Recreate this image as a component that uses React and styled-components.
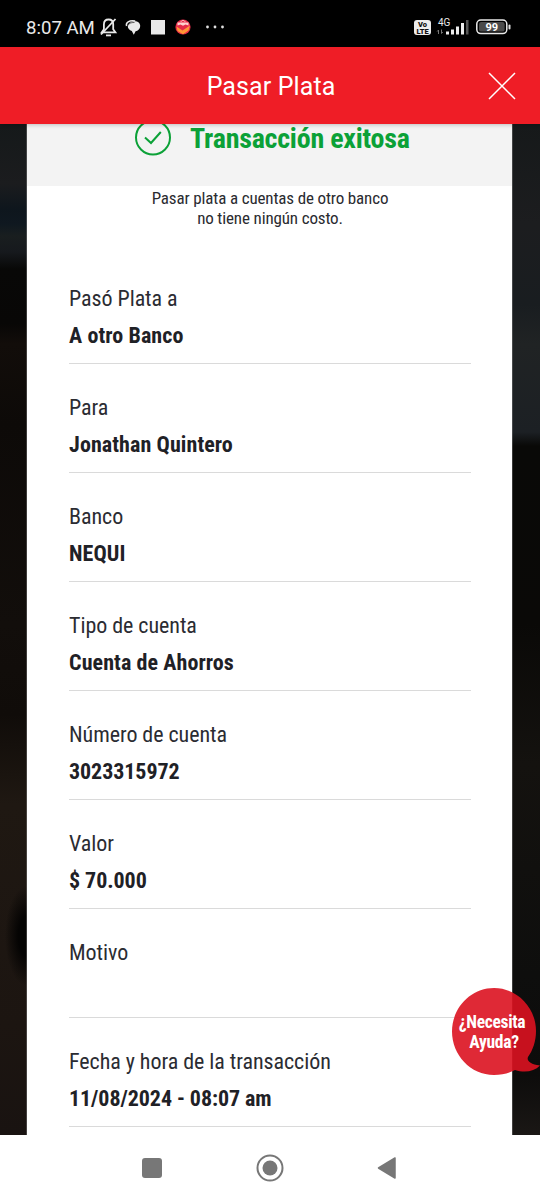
import React from "react";
import styled, { createGlobalStyle } from "styled-components";

const GlobalStyle = createGlobalStyle`
  * { box-sizing: border-box; }
  body { margin: 0; background: #000; }
`;

const condensed = `
  font-family: "Roboto Condensed", Roboto, "Liberation Sans", sans-serif;
  font-stretch: 75%;
`;

const Screen = styled.div`
  position: relative;
  display: flex;
  flex-direction: column;
  width: 540px;
  height: 1200px;
  overflow: hidden;
  background: #000;
  font-family: Roboto, "Liberation Sans", sans-serif;
`;

const StatusBar = styled.div`
  flex: none;
  display: flex;
  align-items: center;
  height: 47px;
  padding: 7px 28px 0 26px;
  color: #e9e9e9;
`;

const Clock = styled.span`
  width: 72px;
  padding-top: 1px;
  font-size: 18.6px;
  line-height: 24px;
  white-space: nowrap;
`;

const StatusIcons = styled.svg`
  display: block;
  flex: none;
`;

const Spacer = styled.div`
  flex: 1;
`;

const Header = styled.header`
  flex: none;
  z-index: 1;
  display: grid;
  grid-template-columns: 1fr auto 1fr;
  align-items: center;
  height: 77px;
  padding: 0 24px 0 26px;
  background: #ef1d26;
  box-shadow: 0 1px 4px rgba(0, 0, 0, 0.22);
`;

const HeaderTitle = styled.h1`
  grid-column: 2;
  margin: 2px 0 0;
  font-size: 25px;
  font-weight: 400;
  line-height: 32px;
  letter-spacing: 0.1px;
  color: #fff;
`;

const CloseButton = styled.button`
  justify-self: end;
  display: flex;
  padding: 0;
  border: 0;
  background: none;
`;

const Backdrop = styled.main`
  flex: none;
  display: flex;
  height: 1011px;
  padding: 0 28px 0 27px;
  background:
    radial-gradient(ellipse 22px 50px at 27px 812px, #050403 40%, transparent 100%) no-repeat,
    linear-gradient(180deg, #15191a 0, #1b1c1e 60px, #0e161d 85px, #0f1820 100px, #191e1f 112px, #16191d 128px, #080807 145px, #080706 200px, #120d0a 220px, #0d0a08 300px, #120e0b 500px, #100c09 590px, #1f1812 680px, #1c1511 900px, #191311 1011px) left / 27px 100% no-repeat,
    linear-gradient(180deg, #16191a 0, #1c1d1f 100px, #191d20 180px, #202324 220px, #1c2024 308px, #090907 322px, #0a0907 500px, #14120f 640px, #0e0e0d 850px, #0d0c0b 950px, #1a1715 1011px) right / 28px 100% no-repeat,
    #000;
`;

const Sheet = styled.section`
  flex: 1;
  background: #fff;
  box-shadow: 0 0 0 1px rgba(150, 150, 150, 0.35);
`;

const ResultBanner = styled.div`
  display: flex;
  align-items: flex-start;
  height: 62px;
  padding: 0 0 0 107px;
  background: #f3f3f3;
`;

const CheckIcon = styled.svg`
  display: block;
  flex: none;
  margin: -6px 18px 0 0;
`;

const ResultTitle = styled.h2`
  ${condensed}
  margin: 0;
  font-size: 28px;
  font-weight: 700;
  line-height: 30px;
  letter-spacing: -0.24px;
  color: #0ba137;
  white-space: nowrap;
`;

const CostNote = styled.p`
  ${condensed}
  height: 69px;
  margin: 0;
  padding: 3px 0 0 1px;
  font-size: 17px;
  line-height: 19.5px;
  letter-spacing: -0.14px;
  text-align: center;
  color: #2a2b30;
`;

const DetailList = styled.dl`
  margin: 0 41px 0 42px;
`;

const DetailRow = styled.div`
  height: 109px;
  padding-top: 25px;
  border-bottom: 1px solid #dadada;
`;

const DetailLabel = styled.dt`
  ${condensed}
  font-size: 22px;
  line-height: 37px;
  letter-spacing: -0.05px;
  color: #2b2c32;
`;

const DetailValue = styled.dd`
  ${condensed}
  margin: 0;
  font-size: 22px;
  font-weight: 700;
  line-height: 37px;
  letter-spacing: ${({ $numeric }) => ($numeric ? "-0.06px" : "0.09px")};
  color: #1f2126;
`;

const HelpBubble = styled.button`
  position: absolute;
  top: 988px;
  right: 0;
  width: 88px;
  height: 88px;
  padding: 0;
  border: 0;
  background: none;
`;

const BubbleShape = styled.svg`
  position: absolute;
  inset: 0;
`;

const BubbleText = styled.span`
  ${condensed}
  position: relative;
  display: block;
  width: ${({ $width }) => $width}px;
  font-size: 17.5px;
  font-weight: 700;
  line-height: 20.5px;
  letter-spacing: -0.3px;
  text-align: center;
  color: #fff;
`;

const NavBar = styled.nav`
  flex: none;
  display: flex;
  align-items: center;
  justify-content: space-between;
  height: 65px;
  padding: 0 143px 0 142px;
  background: #fff;
`;

const details = [
  ["Pasó Plata a", "A otro Banco"],
  ["Para", "Jonathan Quintero"],
  ["Banco", "NEQUI"],
  ["Tipo de cuenta", "Cuenta de Ahorros"],
  ["Número de cuenta", "3023315972"],
  ["Valor", "$ 70.000"],
  ["Motivo", ""],
  ["Fecha y hora de la transacción", "11/08/2024 - 08:07 am"],
];

function LeftStatusIcons() {
  return (
    <StatusIcons width="130" height="20" viewBox="98 17 130 20" fill="none">
      <g stroke="#e9e9e9" strokeWidth="1.8">
        <path d="M101.8 32.3h13.6l-2.200-3v-4.800c0-3-1.800-5-4.600-5s-4.700 2-4.700 5v4.800z" />
        <path d="M101 34.500L115.500 19" />
        <path d="M106 35.400h5" />
      </g>
      <path d="M134 21.200c3.800-.3 6.200 1.800 6.200 4.800 0 3-2.200 4.900-4.600 5.300l-1.800 3.400-2-3.800c-2.400-.7-4.100-2.600-4-4.900.6-2.800 2.800-4.700 6.200-4.800z" fill="#e9e9e9" />
      <path d="M126.600 26c-1.200-3.500 2.500-6 8.600-5" stroke="#e9e9e9" strokeWidth="1.500" />
      <path d="M128 25.500c.6-2 3-3.200 6.500-3" stroke="#222" strokeWidth=".7" />
      <rect x="151" y="20" width="14" height="14.500" fill="#e9e9e9" />
      <circle cx="183" cy="27" r="7.600" fill="#e62a48" />
      <path d="M176.500 26.500l6 4 7.500-5-1.500 5-5.500 3.800-5.500-3.300z" fill="#ff9635" />
      <path d="M177.500 25.500v-3h11v3l-3-1-2.500 1.300-2.500-1.300z" fill="#ffd0cd" />
      <path d="M181 22c0-2 4-2 4 0" stroke="#ffd0cd" />
      <g fill="#e0e0e0">
        <circle cx="207.500" cy="27" r="1.400" />
        <circle cx="215" cy="27" r="1.400" />
        <circle cx="222.500" cy="27" r="1.400" />
      </g>
    </StatusIcons>
  );
}

function RightStatusIcons() {
  return (
    <StatusIcons width="98" height="22" viewBox="414 16 98 22" fontFamily="Roboto, sans-serif">
      <rect x="414" y="20" width="17" height="15" rx="3" fill="#ededed" />
      <text x="422.500" y="26.800" fontSize="7.500" fontWeight="900" textAnchor="middle" fill="#111">Vo</text>
      <text x="422.500" y="33.600" fontSize="7.500" fontWeight="900" textAnchor="middle" fill="#111">LTE</text>
      <text x="438" y="26" fontSize="10" fill="#e9e9e9">4G</text>
      <path d="M438.500 34v-4l-1.300 1.500M441.500 29.500v4l1.300-1.500" stroke="#777" fill="none" />
      <g fill="#ededed">
        <rect x="446" y="31.500" width="3" height="3" />
        <rect x="451" y="29.500" width="3" height="5" />
        <rect x="456" y="26.500" width="3" height="8" />
        <rect x="461" y="23" width="3" height="11.500" />
      </g>
      <rect x="466" y="20" width="2.500" height="14.500" fill="#555" />
      <rect x="476.800" y="20" width="30" height="13.600" rx="4" fill="#000" stroke="#e9e9e9" strokeWidth="1.500" />
      <rect x="479" y="22" width="25.600" height="9.600" rx="2.200" fill="#4a4a4a" />
      <rect x="508.500" y="24.500" width="2" height="5" rx="1" fill="#ddd" />
      <text x="491.800" y="31" fontSize="11" fontWeight="700" textAnchor="middle" fill="#fff">99</text>
    </StatusIcons>
  );
}

export default function App() {
  return (
    <Screen>
      <GlobalStyle />
      <StatusBar>
        <Clock>8:07 AM</Clock>
        <LeftStatusIcons />
        <Spacer />
        <RightStatusIcons />
      </StatusBar>
      <Header>
        <HeaderTitle>Pasar Plata</HeaderTitle>
        <CloseButton aria-label="Cerrar">
          <svg width="28" height="28" viewBox="0 0 28 28" stroke="#fff" strokeWidth="1.5">
            <path d="M1 1l26 26M27 1L1 27" />
          </svg>
        </CloseButton>
      </Header>
      <Backdrop>
        <Sheet>
          <ResultBanner>
            <CheckIcon width="38" height="38" viewBox="0 0 38 38" fill="none" stroke="#0ba137" strokeWidth="2">
              <circle cx="19" cy="19.500" r="17" />
              <path d="M11 19.500l6 5.500 9.800-11" />
            </CheckIcon>
            <ResultTitle>Transacción exitosa</ResultTitle>
          </ResultBanner>
          <CostNote>
            Pasar plata a cuentas de otro banco
            <br />
            no tiene ningún costo.
          </CostNote>
          <DetailList>
            {details.map(([label, value]) => (
              <DetailRow key={label}>
                <DetailLabel>{label}</DetailLabel>
                <DetailValue $numeric={/\d/.test(value)}>{value}</DetailValue>
              </DetailRow>
            ))}
          </DetailList>
        </Sheet>
      </Backdrop>
      <NavBar>
        <svg width="20" height="20" viewBox="0 0 20 20">
          <rect width="20" height="20" rx="3" fill="#777" />
        </svg>
        <svg width="28" height="28" viewBox="0 0 28 28">
          <circle cx="14" cy="14" r="12.500" fill="none" stroke="#777" strokeWidth="2" />
          <circle cx="14" cy="14" r="7.500" fill="#777" />
        </svg>
        <svg width="20" height="24" viewBox="0 0 20 24">
          <path d="M1.500 12L18 2v20z" fill="#777" stroke="#777" strokeWidth="1.500" strokeLinejoin="round" />
        </svg>
      </NavBar>
      <HelpBubble>
        <BubbleShape width="88" height="88" viewBox="0 0 88 88">
          <path
            d="M42 0C65 0 84 19.500 84 43c0 10-3 19-8 26-1.500 3.500 2 7.500 12 8.500-6 6-15 7.500-25 4.500-6 3.200-13 5-21 5C18.500 87 0 67 0 43.500S18.500 0 42 0z"
            fill="#dc1220"
            fillOpacity=".9"
          />
        </BubbleShape>
        <BubbleText $width={80}>¿Necesita</BubbleText>
        <BubbleText $width={84}>Ayuda?</BubbleText>
      </HelpBubble>
    </Screen>
  );
}
